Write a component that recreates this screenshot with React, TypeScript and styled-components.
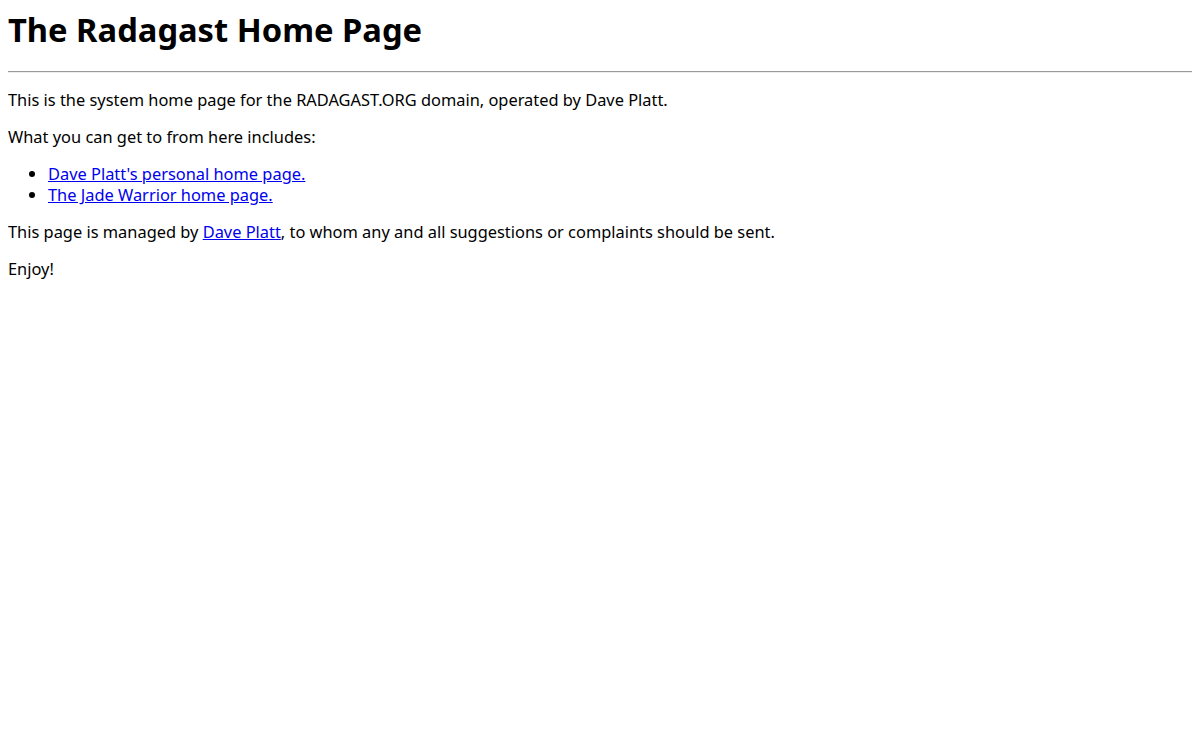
import React from "react";
import styled, { createGlobalStyle } from "styled-components";

const GlobalStyle = createGlobalStyle`
  body {
    margin: 8px;
    background: #fff;
    color: #000;
    font-family: "Noto Sans", "Open Sans", sans-serif;
    font-size: 16.4px;
    line-height: 21px;
  }
`;

const Title = styled.h1`
  margin: 0 0 19px;
  font-size: 32.7px;
  line-height: 44px;
  font-weight: 700;
`;

const Rule = styled.hr`
  margin: 0;
  height: 0;
  border: none;
  border-top: 1px solid #9a9a9a;
  border-bottom: 1px solid #eeeeee;
`;

const Paragraph = styled.p`
  margin: 16px 0;
`;

const List = styled.ul`
  margin: 16px 0;
  padding-left: 40px;
`;

const Item = styled.li``;

const TextLink = styled.a`
  color: #0000ee;
  text-decoration: underline;
`;

export default function App() {
  return (
    <>
      <GlobalStyle />
      <Title>The Radagast Home Page</Title>
      <Rule />
      <Paragraph>
        This is the system home page for the RADAGAST.ORG domain, operated by Dave Platt.
      </Paragraph>
      <Paragraph>What you can get to from here includes:</Paragraph>
      <List>
        <Item>
          <TextLink href="#">Dave Platt's personal home page.</TextLink>
        </Item>
        <Item>
          <TextLink href="#">The Jade Warrior home page.</TextLink>
        </Item>
      </List>
      <Paragraph>
        This page is managed by <TextLink href="#">Dave Platt</TextLink>, to whom any and all
        suggestions or complaints should be sent.
      </Paragraph>
      <Paragraph>Enjoy!</Paragraph>
    </>
  );
}
